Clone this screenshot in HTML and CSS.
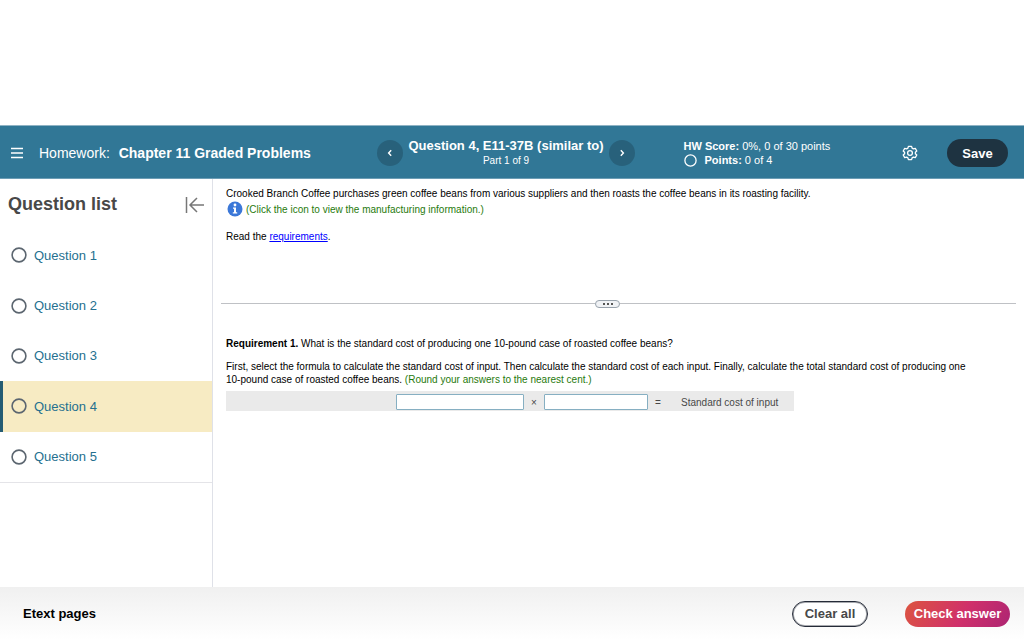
FILE: index.html
```html
<!DOCTYPE html>
<html lang="en">

<head>
  <meta charset="UTF-8" />
  <meta name="viewport" content="width=device-width, initial-scale=1" />
  <title>Homework: Chapter 11 Graded Problems</title>
  <link rel="stylesheet" href="styles.css">
</head>

<body>
  <!-- Top bar -->
  <header class="topbar">
    <div class="topbar-left">
      <button type="button" class="icon-btn menu-btn" aria-label="Menu">
        <svg width="12" height="12" viewBox="0 0 12 12" fill="none" stroke="currentColor" stroke-width="1.3">
          <path d="M0 1.5h12M0 6h12M0 10.5h12" />
        </svg>
      </button>
      <div class="hw-title">Homework: <strong>Chapter 11 Graded Problems</strong></div>
    </div>

    <nav class="question-nav">
      <button type="button" class="round-btn" aria-label="Previous question">
        <svg width="10" height="10" viewBox="0 0 10 10" fill="none" stroke="currentColor" stroke-width="1.4">
          <path d="M6.2 2.2L3.6 5l2.6 2.8" />
        </svg>
      </button>
      <div class="question-info">
        <div class="question-name">Question 4, E11-37B (similar to)</div>
        <div class="question-part">Part 1 of 9</div>
      </div>
      <button type="button" class="round-btn" aria-label="Next question">
        <svg width="10" height="10" viewBox="0 0 10 10" fill="none" stroke="currentColor" stroke-width="1.4">
          <path d="M3.8 2.2L6.4 5L3.8 7.8" />
        </svg>
      </button>
    </nav>

    <div class="topbar-right">
      <div class="score">
        <div><strong>HW Score:</strong> 0%, 0 of 30 points</div>
        <div class="points">
          <svg class="circle" viewBox="0 0 16 16"><circle cx="8" cy="8" r="6.9" /></svg>
          <span><strong>Points:</strong> 0 of 4</span>
        </div>
      </div>
      <button type="button" class="icon-btn" aria-label="Settings">
        <svg width="16" height="16" viewBox="0 0 16 16" fill="none" stroke="currentColor" stroke-width="1.3" stroke-linejoin="round">
          <path d="M6.4 1.3h3.2l.5 1.8 1.3.8 1.9-.5 1.5 2.6-1.4 1.3v1.4l1.4 1.3-1.5 2.6-1.9-.5-1.3.8-.5 1.8H6.4l-.5-1.8-1.3-.8-1.9.5L1.2 10l1.4-1.3V7.300L1.2 6l1.500-2.600 1.900.500 1.300-.800z" />
          <circle cx="8" cy="8" r="2.4" />
        </svg>
      </button>
      <button type="button" class="save-btn">Save</button>
    </div>
  </header>

  <div class="main">
    <!-- Question list -->
    <aside class="sidebar">
      <div class="sidebar-head">
        <h2>Question list</h2>
        <button type="button" class="icon-btn collapse-btn" aria-label="Collapse question list">
          <svg width="19" height="18" viewBox="0 0 19 18" fill="none" stroke="currentColor" stroke-width="1.5">
            <path d="M1.5 1v16M5 9h14M12 2L5 9l7 7" />
          </svg>
        </button>
      </div>
      <ul class="question-list">
        <li><a href="#q1"><svg class="circle" viewBox="0 0 16 16"><circle cx="8" cy="8" r="6.9" /></svg>Question 1</a></li>
        <li><a href="#q2"><svg class="circle" viewBox="0 0 16 16"><circle cx="8" cy="8" r="6.9" /></svg>Question 2</a></li>
        <li><a href="#q3"><svg class="circle" viewBox="0 0 16 16"><circle cx="8" cy="8" r="6.9" /></svg>Question 3</a></li>
        <li class="active"><a href="#q4"><svg class="circle" viewBox="0 0 16 16"><circle cx="8" cy="8" r="6.9" /></svg>Question 4</a></li>
        <li><a href="#q5"><svg class="circle" viewBox="0 0 16 16"><circle cx="8" cy="8" r="6.9" /></svg>Question 5</a></li>
      </ul>
    </aside>

    <main class="content">
      <section class="problem">
        <p>Crooked Branch Coffee purchases green coffee beans from various suppliers and then roasts the coffee beans in its roasting facility.</p>
        <p class="info-line">
          <svg width="16" height="16" viewBox="0 0 16 16">
            <circle cx="8" cy="8" r="7.5" fill="#3c78d8" />
            <circle cx="8" cy="4" r="1.4" fill="#fff" />
            <path d="M6 6.5h3v4.7h1.2v1.2H5.8v-1.2H7V7.7H6z" fill="#fff" />
          </svg>
          <span class="green">(Click the icon to view the manufacturing information.)</span>
        </p>
        <p class="read-line">Read the <a href="#requirements">requirements</a>.</p>
      </section>

      <div class="divider">
        <button type="button" class="divider-handle" aria-label="Resize"><i></i><i></i><i></i></button>
      </div>

      <section class="answer">
        <p><strong>Requirement 1.</strong> What is the standard cost of producing one 10-pound case of roasted coffee beans?</p>
        <p class="instructions">First, select the formula to calculate the standard cost of input. Then calculate the standard cost of each input. Finally, calculate the total standard cost of producing one <span class="nowrap">10-pound</span> case of roasted coffee beans. <span class="green">(Round your answers to the nearest cent.)</span></p>
        <div class="formula">
          <input type="text" class="factor-one" aria-label="First factor" />
          <span class="operator">×</span>
          <input type="text" class="factor-two" aria-label="Second factor" />
          <span class="operator">=</span>
          <span class="result">Standard cost of input</span>
        </div>
      </section>
    </main>
  </div>

  <!-- Footer -->
  <footer class="footer">
    <a href="#etext" class="etext">Etext pages</a>
    <div class="footer-actions">
      <button type="button" class="clear-btn">Clear all</button>
      <button type="button" class="check-btn">Check answer</button>
    </div>
  </footer>
</body>

</html>
```
FILE: styles.css
```css
* {
  box-sizing: border-box;
}

body {
  display: flex;
  flex-direction: column;
  min-height: 100vh;
  margin: 0;
  padding-top: 125px;
  font-family: "Liberation Sans", Arial, sans-serif;
  font-size: 11px;
  line-height: 13px;
  color: #000;
  background-color: #fff;
}

p,
h2,
ul {
  margin: 0;
  padding: 0;
}

button {
  padding: 0;
  border: none;
  font-family: inherit;
  cursor: pointer;
}

.icon-btn {
  display: flex;
  background: none;
  color: inherit;
}

.circle {
  flex: none;
  width: 16px;
  height: 16px;
  fill: none;
  stroke: #5c6670;
  stroke-width: 1.6;
}

.green {
  color: #1f7a0c;
}

.nowrap {
  white-space: nowrap;
}

/* Top bar */
.topbar {
  display: grid;
  grid-template-columns: 1fr auto 1fr;
  align-items: center;
  height: 54px;
  padding: 2px 16px 0 4px;
  border-top: 1px solid #8fb3c4;
  border-bottom: 1px solid #6c9db5;
  background-color: #317796;
  color: #fff;
}

.topbar-left {
  display: flex;
  align-items: center;
  gap: 16px;
  padding-left: 7px;
}

.hw-title {
  font-size: 14px;
  line-height: 18px;
  white-space: nowrap;
}

.hw-title strong {
  margin-left: 5px;
}

.question-nav {
  display: flex;
  align-items: center;
  gap: 5px;
}

.round-btn {
  display: flex;
  justify-content: center;
  align-items: center;
  width: 26px;
  height: 26px;
  border-radius: 50%;
  background-color: #28617b;
  color: #fff;
}

.question-info {
  padding-bottom: 2px;
  text-align: center;
}

.question-name {
  font-size: 13px;
  font-weight: bold;
  line-height: 16px;
}

.question-part {
  font-size: 10px;
}

.topbar-right {
  display: flex;
  align-items: center;
  padding-left: 49px;
}

.score {
  flex: 1;
  line-height: 14px;
  white-space: nowrap;
}

.points {
  display: flex;
  align-items: center;
  gap: 8px;
}

.points .circle {
  width: 13px;
  height: 13px;
  stroke: #fff;
}

.save-btn {
  width: 61px;
  height: 28px;
  margin-left: 29px;
  border-radius: 14px;
  background-color: #1e3341;
  color: #fff;
  font-size: 13px;
  font-weight: bold;
}

/* Question list */
.main {
  display: flex;
  flex: 1;
}

.sidebar {
  flex: none;
  width: 213px;
  border-right: 1px solid #dfe1e8;
}

.sidebar-head {
  display: flex;
  justify-content: space-between;
  align-items: center;
  height: 51px;
  padding: 0 8px;
  color: #484848;
}

.sidebar-head h2 {
  font-size: 18px;
  font-weight: bold;
}

.collapse-btn {
  color: #777;
}

.question-list {
  display: grid;
  grid-auto-rows: 1fr;
  height: 253px;
  border-bottom: 1px solid #e4e4e8;
  list-style: none;
}

.question-list a {
  display: flex;
  align-items: center;
  gap: 7px;
  height: 100%;
  padding-left: 11px;
  color: #25708f;
  font-size: 13px;
  text-decoration: none;
}

.question-list .active {
  border-left: 3px solid #255c73;
  background-color: #f7ebc3;
}

.question-list .active a {
  padding-left: 8px;
}

/* Problem and answer area */
.content {
  flex: 1;
  padding: 8px 8px 0;
  font-size: 10px;
}

.problem {
  height: 112px;
  padding: 0 5px;
}

.info-line {
  display: flex;
  align-items: center;
  gap: 3px;
  margin-top: 1px;
  padding-left: 1px;
}

.read-line {
  margin-top: 13px;
}

.read-line a {
  color: #00f;
}

.divider {
  display: flex;
  align-items: center;
  height: 9px;
}

.divider::before,
.divider::after {
  content: "";
  flex: 17;
  height: 1px;
  background-color: #bfc1c5;
}

.divider::after {
  flex: 18;
}

.divider-handle {
  display: flex;
  justify-content: center;
  align-items: center;
  gap: 2px;
  width: 25px;
  height: 8px;
  border: 1px solid #98a2ac;
  border-radius: 4px;
  background-color: #f0f2f5;
}

.divider-handle i {
  width: 2px;
  height: 2px;
  background-color: #555;
}

.answer {
  padding: 29px 16px 0 5px;
}

.instructions {
  margin-top: 10px;
}

.formula {
  display: flex;
  align-items: center;
  width: 568px;
  max-width: 100%;
  height: 20px;
  margin-top: 5px;
  padding: 2px 0 0 170px;
  background-color: #eaeaea;
  color: #484848;
}

.formula input {
  height: 16px;
  padding: 0 3px;
  border: 1px solid #86afc2;
  border-radius: 1px;
  background-color: #fff;
  font: inherit;
}

.factor-one {
  width: 128px;
}

.factor-two {
  width: 104px;
}

.operator {
  width: 20px;
  text-align: center;
}

.result {
  margin-left: 13px;
}

/* Footer */
.footer {
  display: flex;
  justify-content: space-between;
  align-items: center;
  height: 53px;
  padding: 0 14px 0 23px;
  background: linear-gradient(#f0f0f0, #fff);
}

.etext {
  color: #000;
  font-size: 13px;
  font-weight: bold;
  text-decoration: none;
}

.footer-actions {
  display: flex;
  gap: 37px;
}

.clear-btn,
.check-btn {
  height: 26px;
  border-radius: 13px;
  font-size: 13px;
  font-weight: bold;
}

.clear-btn {
  width: 76px;
  border: 1px solid #252b38;
  box-shadow: inset 0 0 0 1px rgba(37, 43, 56, 0.4);
  background-color: #fff;
  color: #484848;
}

.check-btn {
  width: 105px;
  background: linear-gradient(120deg, #dc5540, #d0306a 55%, #ad2573);
  color: #fff;
}
```
